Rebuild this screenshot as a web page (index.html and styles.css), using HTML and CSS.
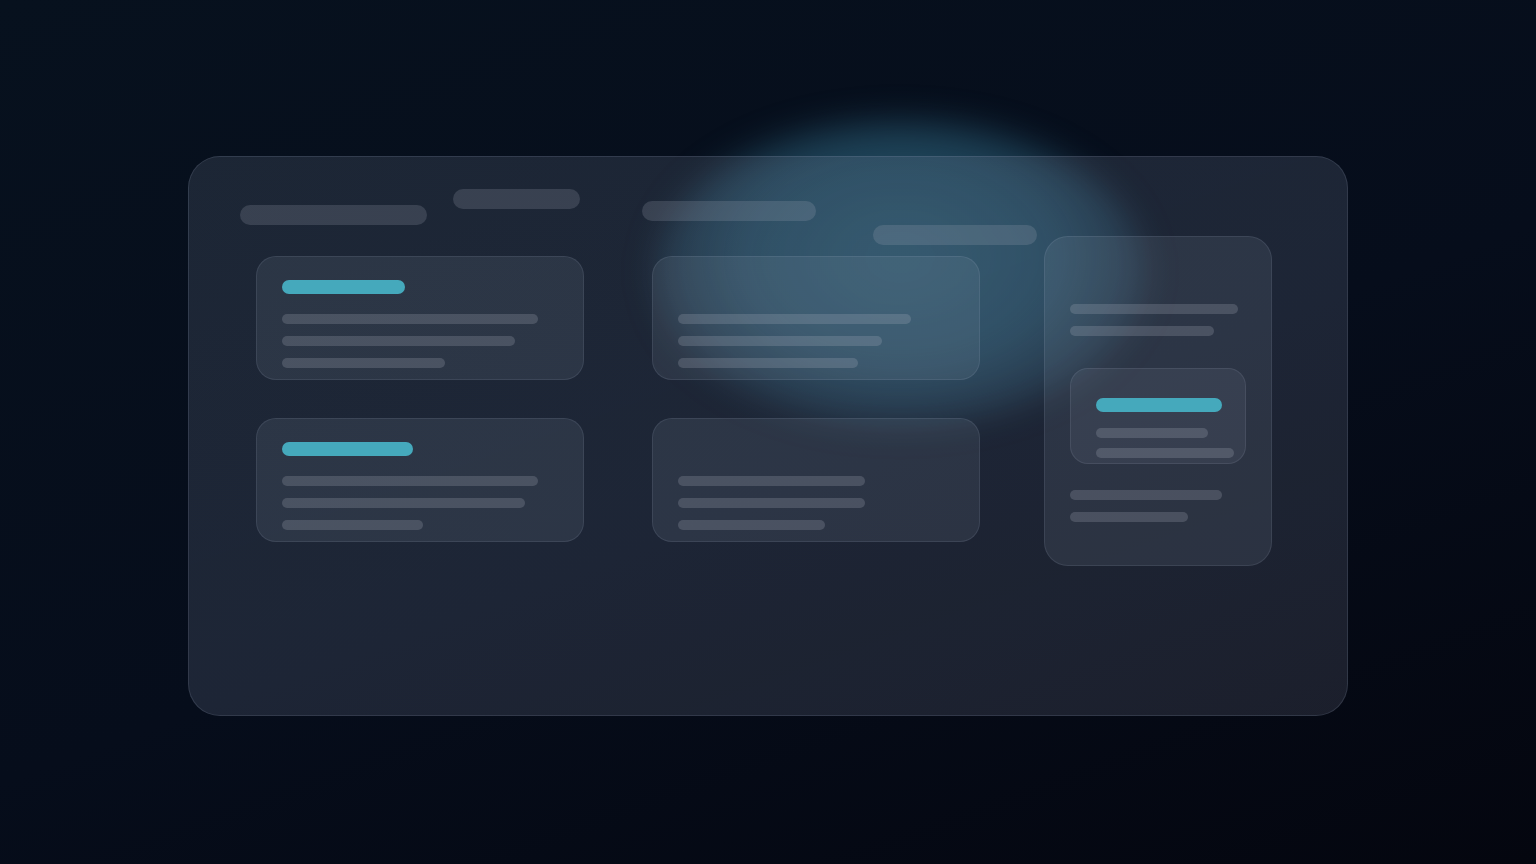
FILE: index.html
```html
<!DOCTYPE html>
<html lang="en">
<head>
<meta charset="utf-8">
<title>Dashboard skeleton</title>
<link rel="stylesheet" href="styles.css">
</head>
<body>
<div class="stage">
  <div class="glow"></div>
  <main class="panel">
    <header class="head">
      <div class="pill p1"></div>
      <div class="pill p2"></div>
      <div class="pill p3"></div>
      <div class="pill p4"></div>
    </header>
    <section class="body">
      <div class="grid">
        <article class="card">
          <div class="bar" style="width:123px"></div>
          <div class="line" style="width:256px"></div>
          <div class="line" style="width:233px"></div>
          <div class="line" style="width:163px"></div>
        </article>
        <article class="card">
          <div class="bar bar-empty"></div>
          <div class="line" style="width:233px"></div>
          <div class="line" style="width:204px"></div>
          <div class="line" style="width:180px"></div>
        </article>
        <article class="card">
          <div class="bar" style="width:131px"></div>
          <div class="line" style="width:256px"></div>
          <div class="line" style="width:243px"></div>
          <div class="line" style="width:141px"></div>
        </article>
        <article class="card">
          <div class="bar bar-empty"></div>
          <div class="line" style="width:187px"></div>
          <div class="line" style="width:187px"></div>
          <div class="line" style="width:147px"></div>
        </article>
      </div>
      <aside class="side">
        <div class="line" style="width:168px"></div>
        <div class="line" style="width:144px"></div>
        <div class="inner">
          <div class="bar" style="width:126px"></div>
          <div class="line" style="width:112px"></div>
          <div class="line" style="width:138px"></div>
        </div>
        <div class="line" style="width:152px"></div>
        <div class="line" style="width:118px"></div>
      </aside>
    </section>
  </main>
</div>
</body>
</html>
```

FILE: styles.css
```css
html, body {
  margin: 0;
  padding: 0;
  height: 100%;
}

body {
  font-family: "Inter", "Liberation Sans", sans-serif;
  background: linear-gradient(160deg, #07111e 0%, #060d1b 55%, #04060f 100%);
  overflow: hidden;
}

.stage {
  position: relative;
  width: 1536px;
  height: 864px;
  display: flex;
  align-items: center;
  justify-content: center;
}

.glow {
  position: absolute;
  left: 655px;
  top: 120px;
  width: 490px;
  height: 305px;
  border-radius: 50%;
  background: radial-gradient(ellipse at 50% 45%, rgba(50, 110, 134, 0.68) 0%, rgba(46, 102, 128, 0.58) 45%, rgba(42, 92, 118, 0.22) 75%, rgba(42, 92, 118, 0) 100%);
  filter: blur(16px);
  z-index: 0;
}

.panel {
  position: relative;
  z-index: 1;
  box-sizing: border-box;
  width: 1160px;
  height: 560px;
  margin-top: 8px;
  padding: 32px 51px 0 51px;
  border-radius: 32px;
  border: 1px solid rgba(160, 175, 200, 0.16);
  background: linear-gradient(160deg, rgba(140, 150, 172, 0.17) 0%, rgba(140, 152, 178, 0.18) 50%, rgba(140, 145, 170, 0.17) 100%);
}

.head {
  display: flex;
  align-items: flex-start;
  height: 47px;
}

.pill {
  height: 20px;
  border-radius: 10px;
  background: rgba(170, 175, 190, 0.2);
}

.p1 { width: 187px; margin-top: 16px; }
.p2 { width: 127px; margin-left: 26px; }
.p3 { width: 174px; margin-left: 62px; margin-top: 12px; }
.p4 { width: 164px; margin-left: 57px; margin-top: 36px; }

.body {
  display: flex;
  align-items: flex-start;
  margin-left: 16px;
}

.grid {
  display: grid;
  grid-template-columns: 328px 328px;
  grid-auto-rows: 124px;
  column-gap: 68px;
  row-gap: 38px;
  margin-top: 20px;
}

.card {
  box-sizing: border-box;
  display: flex;
  flex-direction: column;
  align-items: flex-start;
  padding: 23px 25px 0 25px;
  border-radius: 20px;
  border: 1px solid rgba(180, 190, 210, 0.12);
  background: rgba(160, 170, 190, 0.12);
}

.bar {
  height: 14px;
  border-radius: 7px;
  background: #45a9bc;
  margin-bottom: 20px;
  flex: none;
}

.bar-empty {
  width: 120px;
  background: transparent;
}

.line {
  height: 10px;
  border-radius: 5px;
  background: rgba(180, 185, 200, 0.22);
  flex: none;
}

.card .line + .line {
  margin-top: 12px;
}

.side {
  box-sizing: border-box;
  width: 228px;
  height: 330px;
  margin-left: 64px;
  display: flex;
  flex-direction: column;
  align-items: flex-start;
  padding: 67px 25px 0 25px;
  border-radius: 24px;
  border: 1px solid rgba(180, 190, 210, 0.12);
  background: rgba(160, 170, 190, 0.12);
}

.side > .line + .line {
  margin-top: 12px;
}

.inner {
  box-sizing: border-box;
  width: 176px;
  height: 96px;
  margin: 32px 0 26px 0;
  display: flex;
  flex-direction: column;
  align-items: flex-start;
  padding: 29px 25px 0 25px;
  border-radius: 18px;
  border: 1px solid rgba(180, 190, 210, 0.12);
  background: rgba(160, 170, 190, 0.1);
}

.inner .bar {
  margin-bottom: 16px;
}

.inner .line + .line {
  margin-top: 10px;
}
```
